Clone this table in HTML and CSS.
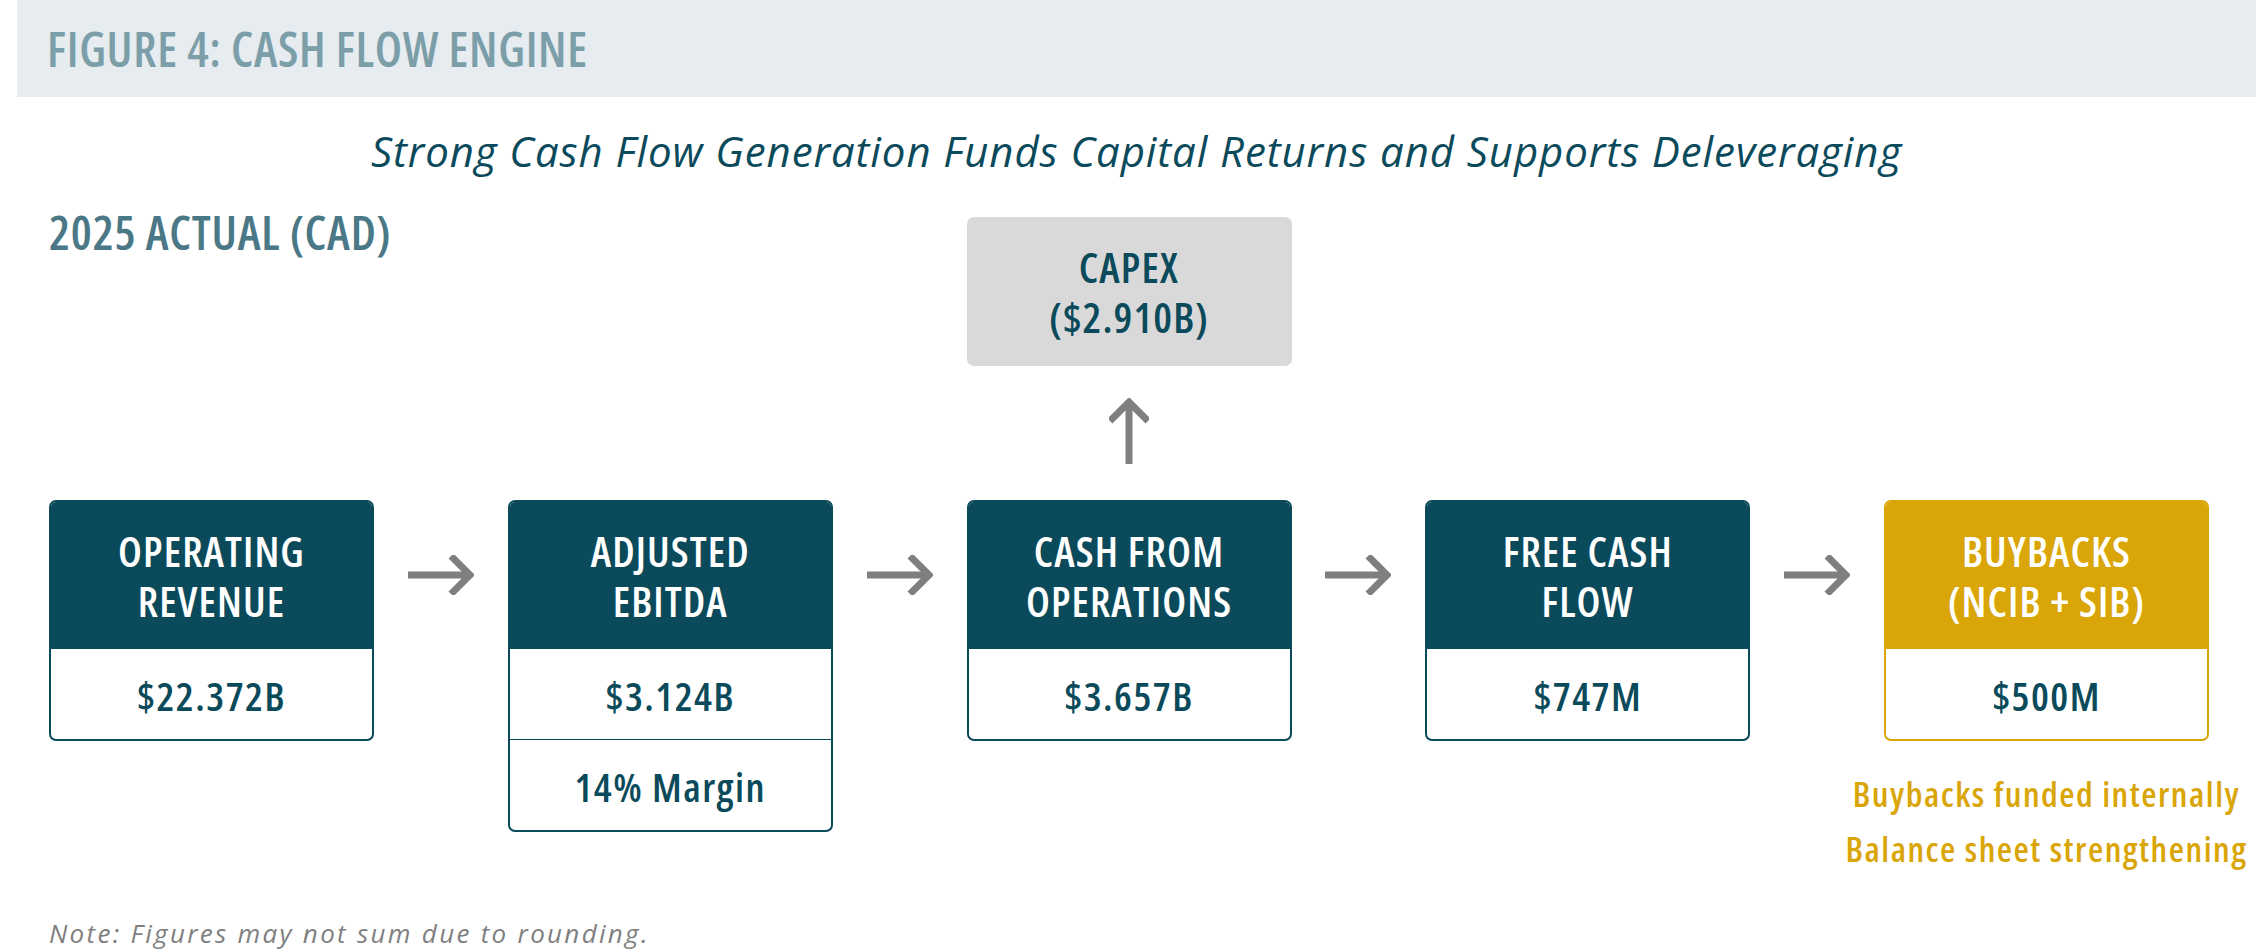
FILE: index.html
```html
<!DOCTYPE html>
<html lang="en">
<head>
<meta charset="utf-8">
<title>Figure 4: Cash Flow Engine</title>
<link rel="stylesheet" href="styles.css">
</head>
<body>
<div class="page">
  <div class="band">
    <h1 class="fig-title">FIGURE 4: CASH FLOW ENGINE</h1>
  </div>
  <p class="subtitle">Strong Cash Flow Generation Funds Capital Returns and Supports Deleveraging</p>

  <div class="diagram">
    <div class="period">2025 ACTUAL (CAD)</div>
    <div class="capex">CAPEX<br>($2.910B)</div>

    <div class="up-arrow">
      <svg width="40" height="66" viewBox="0 0 40 66" aria-hidden="true">
        <line x1="20" y1="66" x2="20" y2="4" class="arrow-stroke"/>
        <polyline points="1,23 20,4 39,23" class="arrow-stroke" fill="none"/>
      </svg>
    </div>

    <div class="col">
      <div class="card">
        <div class="card-head">OPERATING<br>REVENUE</div>
        <div class="card-val">$22.372B</div>
      </div>
    </div>
    <div class="flow-arrow">
      <svg width="66" height="40" viewBox="0 0 66 40" aria-hidden="true">
        <line x1="0" y1="20" x2="62" y2="20" class="arrow-stroke"/>
        <polyline points="43,1 62,20 43,39" class="arrow-stroke" fill="none"/>
      </svg>
    </div>
    <div class="col">
      <div class="card">
        <div class="card-head">ADJUSTED<br>EBITDA</div>
        <div class="card-val">$3.124B</div>
        <div class="card-val card-sep">14% Margin</div>
      </div>
    </div>
    <div class="flow-arrow">
      <svg width="66" height="40" viewBox="0 0 66 40" aria-hidden="true">
        <line x1="0" y1="20" x2="62" y2="20" class="arrow-stroke"/>
        <polyline points="43,1 62,20 43,39" class="arrow-stroke" fill="none"/>
      </svg>
    </div>
    <div class="col">
      <div class="card">
        <div class="card-head">CASH FROM<br>OPERATIONS</div>
        <div class="card-val">$3.657B</div>
      </div>
    </div>
    <div class="flow-arrow">
      <svg width="66" height="40" viewBox="0 0 66 40" aria-hidden="true">
        <line x1="0" y1="20" x2="62" y2="20" class="arrow-stroke"/>
        <polyline points="43,1 62,20 43,39" class="arrow-stroke" fill="none"/>
      </svg>
    </div>
    <div class="col">
      <div class="card">
        <div class="card-head">FREE CASH<br>FLOW</div>
        <div class="card-val">$747M</div>
      </div>
    </div>
    <div class="flow-arrow">
      <svg width="66" height="40" viewBox="0 0 66 40" aria-hidden="true">
        <line x1="0" y1="20" x2="62" y2="20" class="arrow-stroke"/>
        <polyline points="43,1 62,20 43,39" class="arrow-stroke" fill="none"/>
      </svg>
    </div>
    <div class="col">
      <div class="card card-gold">
        <div class="card-head">BUYBACKS<br>(NCIB + SIB)</div>
        <div class="card-val">$500M</div>
      </div>
      <div class="gold-notes">
        <div>Buybacks funded internally</div>
        <div>Balance sheet strengthening</div>
      </div>
    </div>
  </div>

  <p class="note">Note: Figures may not sum due to rounding.</p>
</div>
</body>
</html>
```

FILE: styles.css
```css
html, body {
  margin: 0;
  padding: 0;
  background: #ffffff;
}

body {
  font-family: "Open Sans", "Liberation Sans", sans-serif;
  color: #0b4a5b;
}

.page {
  margin-left: 17px;
  width: 2239px;
  height: 950px;
  overflow: hidden;
}

.band {
  height: 97px;
  background: #e6ecef;
  display: flex;
  align-items: center;
  padding-left: 30px;
}

.fig-title {
  margin: 0;
  font-size: 48px;
  line-height: 48px;
  font-weight: 600;
  font-stretch: 75%;
  letter-spacing: 0.7px;
  color: #7b9ea8;
}

.subtitle {
  margin: 33px 0 0;
  text-align: center;
  font-size: 42px;
  line-height: 42px;
  font-style: italic;
  font-weight: 400;
  letter-spacing: 0.9px;
  color: #0b4a5b;
}

.diagram {
  margin-top: 37px;
  padding: 0 47px 0 32px;
  display: grid;
  grid-template-columns: 325px 1fr 325px 1fr 325px 1fr 325px 1fr 325px;
  grid-template-rows: auto auto auto;
  align-items: start;
}

.period {
  grid-column: 1 / 4;
  grid-row: 1;
  font-size: 47px;
  line-height: 47px;
  font-weight: 600;
  font-stretch: 75%;
  letter-spacing: 0.8px;
  color: #4a7886;
}

.capex {
  grid-column: 5;
  grid-row: 1;
  margin-top: 8px;
  height: 149px;
  background: #d9d9d9;
  border-radius: 7px;
  display: flex;
  align-items: center;
  justify-content: center;
  text-align: center;
  font-size: 42px;
  line-height: 50px;
  font-weight: 600;
  font-stretch: 75%;
  letter-spacing: 1.1px;
  color: #0b4a5b;
}

.up-arrow {
  grid-column: 5;
  grid-row: 2;
  display: flex;
  justify-content: center;
  padding: 32px 0 36px;
}

.up-arrow svg,
.flow-arrow svg {
  display: block;
}

.arrow-stroke {
  stroke: #7f7f7f;
  stroke-width: 7;
  stroke-linecap: butt;
  stroke-linejoin: miter;
}

.col {
  grid-row: 3;
  display: flex;
  flex-direction: column;
}

.flow-arrow {
  grid-row: 3;
  height: 149px;
  display: flex;
  align-items: center;
  justify-content: center;
}

.card {
  border: 2px solid #0b4a5b;
  border-radius: 7px;
  overflow: hidden;
  background: #ffffff;
}

.card-head {
  height: 147px;
  background: #0b4a5b;
  color: #ffffff;
  display: flex;
  align-items: center;
  justify-content: center;
  text-align: center;
  font-size: 42px;
  line-height: 50px;
  font-weight: 600;
  font-stretch: 75%;
  letter-spacing: 1.1px;
}

.card-val {
  height: 90px;
  box-sizing: border-box;
  padding-top: 4px;
  display: flex;
  align-items: center;
  justify-content: center;
  font-size: 40px;
  line-height: 40px;
  font-weight: 600;
  font-stretch: 75%;
  letter-spacing: 1.5px;
  color: #0b4a5b;
}

.card-sep {
  height: 91px;
  border-top: 1px solid #0b4a5b;
}

.card-gold {
  border-color: #d9a507;
}

.card-gold .card-head {
  background: #d9a507;
}

.gold-notes {
  margin: 25px -60px 0;
  text-align: center;
  white-space: nowrap;
  font-size: 35px;
  line-height: 55px;
  font-weight: 600;
  font-stretch: 75%;
  letter-spacing: 1.5px;
  color: #d9a507;
}

.note {
  margin: 44px 0 0 32px;
  font-size: 26px;
  line-height: 26px;
  font-style: italic;
  font-weight: 400;
  letter-spacing: 2.3px;
  color: #7f7f7f;
}
```
